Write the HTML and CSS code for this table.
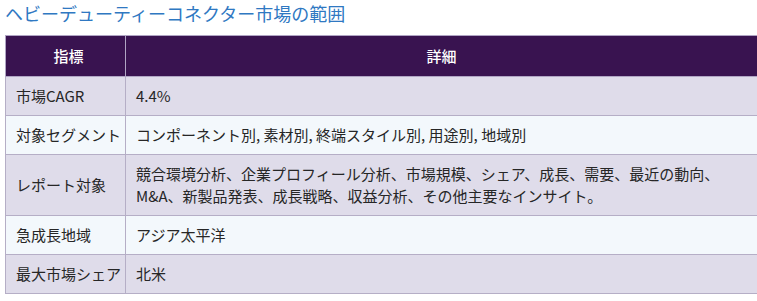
FILE: index.html
```html
<!DOCTYPE html>
<html lang="ja">
<head>
<meta charset="utf-8">
<title>ヘビーデューティーコネクター市場の範囲</title>
<link rel="stylesheet" href="styles.css">
</head>
<body>
<h2 class="title">ヘビーデューティーコネクター市場の範囲</h2>
<table class="scope">
  <thead>
    <tr><th class="col-key">指標</th><th>詳細</th></tr>
  </thead>
  <tbody>
    <tr class="odd"><td class="col-key">市場CAGR</td><td>4.4%</td></tr>
    <tr class="even"><td class="col-key">対象セグメント</td><td>コンポーネント別, 素材別, 終端スタイル別, 用途別, 地域別</td></tr>
    <tr class="odd"><td class="col-key">レポート対象</td><td>競合環境分析、企業プロフィール分析、市場規模、シェア、成長、需要、最近の動向、<br>M&amp;A、新製品発表、成長戦略、収益分析、その他主要なインサイト。</td></tr>
    <tr class="even"><td class="col-key">急成長地域</td><td>アジア太平洋</td></tr>
    <tr class="odd"><td class="col-key">最大市場シェア</td><td>北米</td></tr>
  </tbody>
</table>
</body>
</html>
```
FILE: styles.css
```css
html, body {
  margin: 0;
  padding: 0;
  background: #ffffff;
  overflow: hidden;
}
body {
  padding-left: 5px;
  font-family: "Noto Sans CJK JP", "Noto Sans", sans-serif;
  color: #262626;
}
.title {
  margin: 0 0 8px 0;
  font-size: 18px;
  font-weight: 400;
  line-height: 27px;
  color: #2f78c2;
}
.scope {
  border-collapse: collapse;
  width: 753px;
  font-size: 15px;
  line-height: 22px;
}
.scope th, .scope td {
  border: 1px solid #b5aec6;
  padding: 8px 10px;
  text-align: left;
  vertical-align: middle;
}
.scope th {
  background: #391350;
  color: #ffffff;
  font-weight: 500;
  text-align: center;
  padding: 9px 10px;
  border-color: #b0a5c4;
}
.scope .col-key {
  width: 105px;
  padding-right: 4px;
  white-space: nowrap;
}
.scope tr.odd td {
  background: #dfdcea;
}
.scope tr.even td {
  background: #f3f8fc;
}
```
